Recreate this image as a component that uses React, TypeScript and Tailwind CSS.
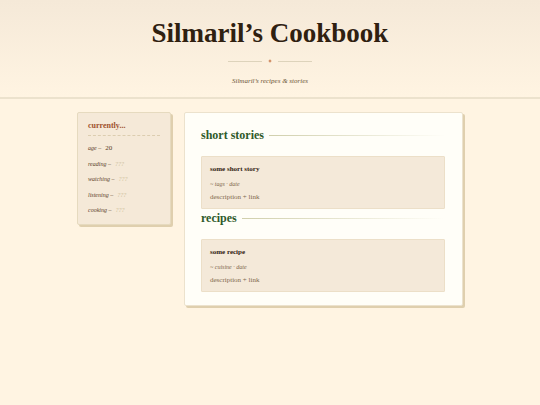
import React from 'react';

interface Status {
  label: string;
  value?: string;
}

interface Entry {
  title: string;
  meta: string;
  text: string;
}

const statuses: Status[] = [
  { label: 'age', value: '20' },
  { label: 'reading' },
  { label: 'watching' },
  { label: 'listening' },
  { label: 'cooking' },
];

const sections: { heading: string; entries: Entry[] }[] = [
  {
    heading: 'short stories',
    entries: [{ title: 'some short story', meta: '~ tags · date', text: 'description + link' }],
  },
  {
    heading: 'recipes',
    entries: [{ title: 'some recipe', meta: '~ cuisine · date', text: 'description + link' }],
  },
];

function Header() {
  return (
    <header className="flex flex-col items-center border-b-2 border-[#ece2cd] bg-linear-to-b from-[#f5e9d8] to-[#fff4e2] pt-[15px] pb-[11px]">
      <h1 className="text-[27px] leading-9 font-bold text-[#2f2010]">Silmaril’s Cookbook</h1>
      <div className="mt-1 flex h-3 items-center gap-[6px]">
        <span className="h-px w-[34px] bg-[#ddd3bb]" />
        <svg viewBox="0 0 8 8" className="h-1 w-1 fill-[#c4703f]">
          <path d="M4 0 L5.2 2.8 L8 4 L5.2 5.2 L4 8 L2.8 5.2 L0 4 L2.8 2.8 Z" />
        </svg>
        <span className="h-px w-[34px] bg-[#ddd3bb]" />
      </div>
      <p className="mt-[10px] text-[7px] leading-[9px] text-[#6b5236] italic">Silmaril’s recipes &amp; stories</p>
    </header>
  );
}

function Sidebar() {
  return (
    <aside className="rounded-xs border border-[#e6dabf] bg-[#f5e9d8] px-[10px] pt-2 pb-[9px] shadow-[2px_2px_0_#dfcfae]">
      <h2 className="border-b border-dashed border-[#dccdb0] pb-1 text-[8px] leading-[10px] font-bold text-[#a0522d]">
        currently...
      </h2>
      <ul className="mt-2 flex h-[71px] flex-col justify-between">
        {statuses.map((item) => (
          <li key={item.label} className="flex gap-1 text-[6px] leading-[9px] text-[#5a4028]">
            <span className="italic">{item.label} –</span>
            {item.value ? <span className="text-[7px]">{item.value}</span> : <span className="text-[#c9bb97] italic">???</span>}
          </li>
        ))}
      </ul>
    </aside>
  );
}

function EntryCard({ entry }: { entry: Entry }) {
  return (
    <article className="rounded-[1px] border border-[#ecdfc8] bg-[#f4e9d9] px-2 pt-[7px] pb-[6px]">
      <h3 className="text-[7px] leading-[10px] font-bold text-[#2f2010]">{entry.title}</h3>
      <p className="mt-[5px] text-[6px] leading-[10px] text-[#80684c] italic">{entry.meta}</p>
      <p className="mt-1 text-[7px] leading-[9px] text-[#80684c]">{entry.text}</p>
    </article>
  );
}

export default function App() {
  return (
    <div className="min-h-screen bg-[#fff4e2] font-['Liberation_Serif',serif]">
      <Header />
      <div className="mx-auto mt-[13px] grid w-full max-w-[386px] grid-cols-[94px_1fr] items-start gap-[13px]">
        <Sidebar />
        <main className="rounded-xs border border-[#ece2cd] bg-[#fffef8] pt-[13px] pr-[17px] pb-[13px] pl-4 shadow-[2px_2px_0_#dfcfae]">
          {sections.map((section) => (
            <section key={section.heading}>
              <h2 className="mb-[11px] flex items-center gap-[5px] text-[12px] leading-[19px] font-bold text-[#2f5a2a]">
                {section.heading}
                <span className="h-px flex-1 bg-linear-to-r from-[#d0cfac] to-transparent" />
              </h2>
              {section.entries.map((entry) => (
                <EntryCard key={entry.title} entry={entry} />
              ))}
            </section>
          ))}
        </main>
      </div>
    </div>
  );
}
